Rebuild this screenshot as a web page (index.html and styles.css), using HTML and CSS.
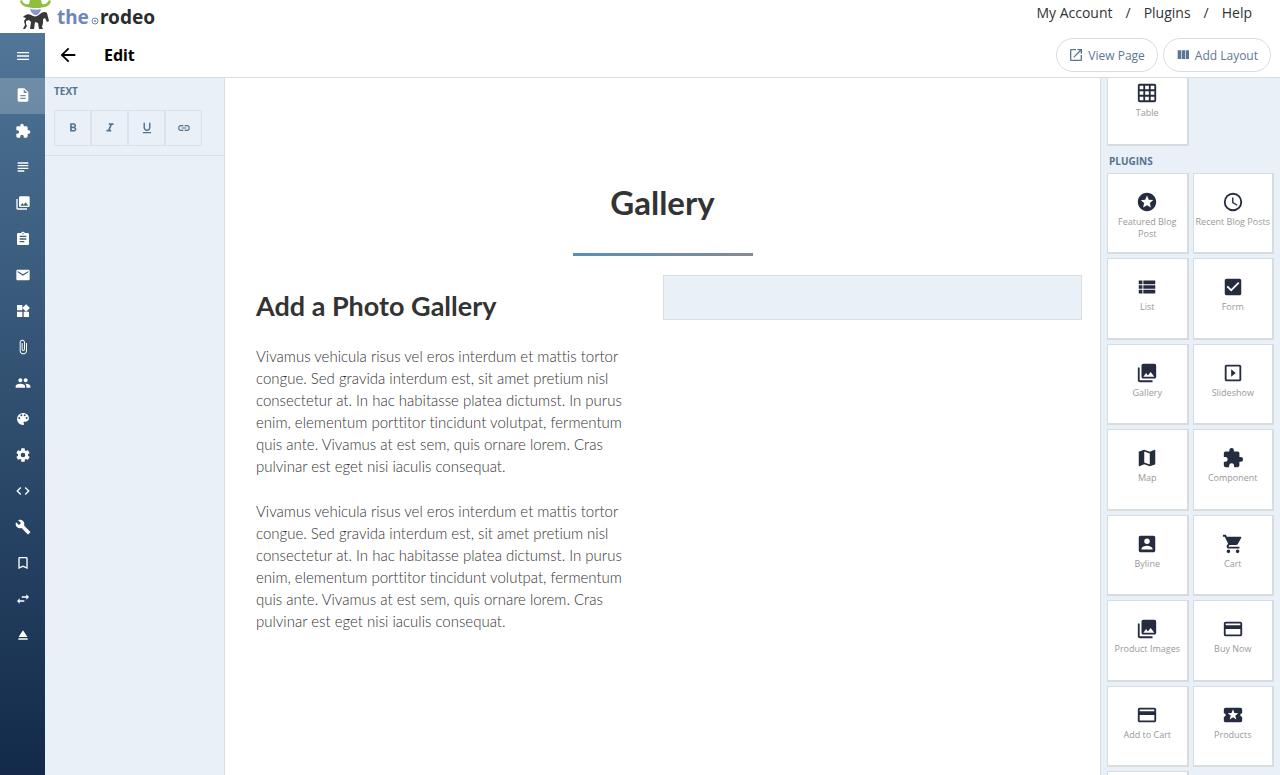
FILE: index.html
```html
<!DOCTYPE html>
<html lang="en">
  <head>
    <meta charset="UTF-8" />
    <meta name="viewport" content="width=device-width, initial-scale=1.0" />
    <title>Edit - Gallery</title>
    <link rel="stylesheet" href="styles.css">
  </head>
  <body>
    <!-- Icon sprite -->
    <svg class="sprite" aria-hidden="true">
      <symbol id="menu" viewBox="0 0 24 24"><path d="M3 18h18v-2H3v2zm0-5h18v-2H3v2zm0-7v2h18V6H3z"/></symbol>
      <symbol id="file" viewBox="0 0 24 24"><path d="M14 2H6c-1.100 0-2 .9-2 2v16c0 1.100.9 2 2 2h12c1.100 0 2-.9 2-2V8l-6-6zm2 16H8v-2h8v2zm0-4H8v-2h8v2zm-3-5V3.500L18.500 9H13z"/></symbol>
      <symbol id="extension" viewBox="0 0 24 24"><path d="M20.500 11H19V7c0-1.100-.9-2-2-2h-4V3.500a2.500 2.500 0 0 0-5 0V5H4c-1.100 0-2 .9-2 2v3.800h1.500a2.700 2.700 0 0 1 0 5.400H2V20c0 1.100.9 2 2 2h3.800v-1.500a2.700 2.700 0 0 1 5.400 0V22H17c1.100 0 2-.9 2-2v-4h1.500a2.500 2.500 0 0 0 0-5z"/></symbol>
      <symbol id="subject" viewBox="0 0 24 24"><path d="M14 17H4v2h10v-2zm6-8H4v2h16V9zM4 15h16v-2H4v2zM4 5v2h16V5H4z"/></symbol>
      <symbol id="images" viewBox="0 0 24 24"><path d="M22 16V4c0-1.100-.9-2-2-2H8c-1.100 0-2 .9-2 2v12c0 1.100.9 2 2 2h12c1.100 0 2-.9 2-2zm-11-4l2.030 2.710L16 11l4 5H8l3-4zM2 6v14c0 1.100.9 2 2 2h14v-2H4V6H2z"/></symbol>
      <symbol id="clipboard" viewBox="0 0 24 24"><path d="M19 3h-4.180C14.400 1.840 13.300 1 12 1s-2.400.84-2.820 2H5c-1.100 0-2 .9-2 2v14c0 1.100.9 2 2 2h14c1.100 0 2-.9 2-2V5c0-1.100-.9-2-2-2zm-7 0a1 1 0 1 1 0 2 1 1 0 0 1 0-2zm2 14H7v-2h7v2zm3-4H7v-2h10v2zm0-4H7V7h10v2z"/></symbol>
      <symbol id="mail" viewBox="0 0 24 24"><path d="M20 4H4c-1.100 0-2 .9-2 2v12c0 1.100.9 2 2 2h16c1.100 0 2-.9 2-2V6c0-1.100-.9-2-2-2zm0 4l-8 5-8-5V6l8 5 8-5v2z"/></symbol>
      <symbol id="widgets" viewBox="0 0 24 24"><path d="M13 13v8h8v-8h-8zM3 21h8v-8H3v8zM3 3v8h8V3H3zm13.660-1.310L11 7.340 16.660 13l5.660-5.660-5.660-5.650z"/></symbol>
      <symbol id="attach" viewBox="0 0 24 24"><path d="M16.500 6v11.500c0 2.210-1.790 4-4 4s-4-1.790-4-4V5a2.500 2.500 0 0 1 5 0v10.500c0 .55-.45 1-1 1s-1-.45-1-1V6H10v9.500a2.500 2.500 0 0 0 5 0V5c0-2.210-1.790-4-4-4S7 2.790 7 5v12.500c0 3.040 2.460 5.500 5.500 5.500s5.500-2.460 5.500-5.500V6h-1.500z"/></symbol>
      <symbol id="people" viewBox="0 0 24 24"><path d="M16 11c1.660 0 2.990-1.340 2.990-3S17.660 5 16 5s-3 1.340-3 3 1.340 3 3 3zm-8 0c1.660 0 2.990-1.340 2.990-3S9.660 5 8 5 5 6.340 5 8s1.340 3 3 3zm0 2c-2.330 0-7 1.170-7 3.500V19h14v-2.500C15 14.170 10.330 13 8 13zm8 0c-.29 0-.62.02-.97.05 1.160.84 1.970 1.970 1.970 3.450V19h6v-2.500c0-2.330-4.670-3.500-7-3.500z"/></symbol>
      <symbol id="palette" viewBox="0 0 24 24"><path d="M12 3a9 9 0 0 0 0 18c.83 0 1.500-.67 1.500-1.500 0-.39-.15-.74-.39-1.010-.23-.26-.38-.61-.38-.99 0-.83.67-1.500 1.500-1.500H16c2.760 0 5-2.240 5-5 0-4.420-4.030-8-9-8zm-5.500 9a1.500 1.500 0 1 1 0-3 1.500 1.500 0 0 1 0 3zm3-4a1.500 1.500 0 1 1 0-3 1.500 1.500 0 0 1 0 3zm5 0a1.500 1.500 0 1 1 0-3 1.500 1.500 0 0 1 0 3zm3 4a1.500 1.500 0 1 1 0-3 1.500 1.500 0 0 1 0 3z"/></symbol>
      <symbol id="settings" viewBox="0 0 24 24"><path d="M19.430 12.980c.04-.32.07-.64.07-.98s-.03-.66-.07-.98l2.110-1.650c.19-.15.24-.42.12-.64l-2-3.460c-.12-.22-.39-.3-.61-.22l-2.490 1c-.52-.4-1.080-.73-1.690-.98l-.38-2.650C14.460 2.180 14.250 2 14 2h-4c-.25 0-.46.18-.49.42l-.38 2.650c-.61.25-1.170.59-1.690.98l-2.490-1c-.23-.09-.49 0-.61.22l-2 3.460c-.13.22-.07.49.12.64l2.110 1.650c-.04.32-.07.65-.07.98s.03.66.07.98l-2.110 1.650c-.19.15-.24.42-.12.64l2 3.460c.12.22.39.3.61.22l2.490-1c.52.4 1.080.73 1.690.98l.38 2.650c.03.24.24.42.49.42h4c.25 0 .46-.18.49-.42l.38-2.650c.61-.25 1.170-.59 1.690-.98l2.490 1c.23.09.49 0 .61-.22l2-3.460c.12-.22.07-.49-.12-.64l-2.110-1.650zM12 15.500a3.500 3.500 0 1 1 0-7 3.500 3.500 0 0 1 0 7z"/></symbol>
      <symbol id="code" viewBox="0 0 24 24"><path d="M9.400 16.600L4.800 12l4.600-4.600L8 6l-6 6 6 6 1.400-1.400zm5.200 0l4.600-4.600-4.600-4.600L16 6l6 6-6 6-1.400-1.400z"/></symbol>
      <symbol id="build" viewBox="0 0 24 24"><path d="M22.700 19l-9.100-9.100c.9-2.300.4-5-1.500-6.900-2-2-5-2.400-7.400-1.300L9 6 6 9 1.600 4.700C.4 7.100.9 10.100 2.900 12.100c1.900 1.900 4.600 2.400 6.900 1.500l9.100 9.100c.4.4 1 .4 1.400 0l2.300-2.300c.5-.4.5-1.100.1-1.400z"/></symbol>
      <symbol id="bookmark" viewBox="0 0 24 24"><path d="M17 3H7c-1.100 0-2 .9-2 2v16l7-3 7 3V5c0-1.100-.9-2-2-2zm0 15l-5-2.180L7 18V5h10v13z"/></symbol>
      <symbol id="swap" viewBox="0 0 24 24"><path d="M6.990 11L3 15l3.990 4v-3H14v-2H6.990v-3zM21 9l-3.990-4v3H10v2h7.010v3L21 9z"/></symbol>
      <symbol id="eject" viewBox="0 0 24 24"><path d="M5 17h14v2H5zm7-12L5.330 15h13.340z"/></symbol>
      <symbol id="back" viewBox="0 0 24 24"><path d="M20 11H7.830l5.590-5.590L12 4l-8 8 8 8 1.410-1.410L7.830 13H20v-2z"/></symbol>
      <symbol id="bold" viewBox="0 0 24 24"><path d="M15.600 10.790c.97-.67 1.650-1.770 1.650-2.790 0-2.260-1.750-4-4-4H7v14h7.040c2.090 0 3.710-1.700 3.710-3.790 0-1.520-.86-2.820-2.150-3.420zM10 6.500h3a1.500 1.500 0 0 1 0 3h-3v-3zm3.500 9H10v-3h3.500a1.500 1.500 0 0 1 0 3z"/></symbol>
      <symbol id="italic" viewBox="0 0 24 24"><path d="M10 4v3h2.210l-3.420 8H6v3h8v-3h-2.210l3.420-8H18V4z"/></symbol>
      <symbol id="underline" viewBox="0 0 24 24"><path d="M12 17c3.310 0 6-2.690 6-6V3h-2.500v8a3.500 3.500 0 0 1-7 0V3H6v8c0 3.310 2.690 6 6 6zm-7 2v2h14v-2H5z"/></symbol>
      <symbol id="link" viewBox="0 0 24 24"><path d="M3.900 12c0-1.710 1.390-3.100 3.100-3.100h4V7H7a5 5 0 0 0 0 10h4v-1.900H7c-1.710 0-3.100-1.390-3.100-3.100zM8 13h8v-2H8v2zm9-6h-4v1.900h4a3.100 3.100 0 0 1 0 6.200h-4V17h4a5 5 0 0 0 0-10z"/></symbol>
      <symbol id="launch" viewBox="0 0 24 24"><path d="M19 19H5V5h7V3H5a2 2 0 0 0-2 2v14a2 2 0 0 0 2 2h14c1.100 0 2-.9 2-2v-7h-2v7zM14 3v2h3.590l-9.830 9.830 1.410 1.410L19 6.410V10h2V3h-7z"/></symbol>
      <symbol id="columns" viewBox="0 0 24 24"><path d="M10 18h5V5h-5v13zm-6 0h5V5H4v13zM16 5v13h5V5h-5z"/></symbol>
      <symbol id="grid" viewBox="0 0 24 24"><path d="M20 2H4c-1.100 0-2 .9-2 2v16c0 1.100.9 2 2 2h16c1.100 0 2-.9 2-2V4c0-1.100-.9-2-2-2zM8 20H4v-4h4v4zm0-6H4v-4h4v4zm0-6H4V4h4v4zm6 12h-4v-4h4v4zm0-6h-4v-4h4v4zm0-6h-4V4h4v4zm6 12h-4v-4h4v4zm0-6h-4v-4h4v4zm0-6h-4V4h4v4z"/></symbol>
      <symbol id="stars" viewBox="0 0 24 24"><path d="M11.990 2C6.470 2 2 6.480 2 12s4.470 10 9.990 10C17.520 22 22 17.520 22 12S17.520 2 11.990 2zm4.240 16L12 15.450 7.770 18l1.120-4.810-3.730-3.230 4.920-.42L12 5l1.920 4.530 4.920.42-3.730 3.230L16.230 18z"/></symbol>
      <symbol id="clock" viewBox="0 0 24 24"><path d="M12 2a10 10 0 1 0 0 20 10 10 0 0 0 0-20zm0 18a8 8 0 1 1 0-16 8 8 0 0 1 0 16zm.5-13H11v6l5.250 3.150.75-1.230-4.500-2.670z"/></symbol>
      <symbol id="list" viewBox="0 0 24 24"><path d="M3 14h4v-4H3v4zm0 5h4v-4H3v4zM3 9h4V5H3v4zm5 5h13v-4H8v4zm0 5h13v-4H8v4zM8 5v4h13V5H8z"/></symbol>
      <symbol id="check" viewBox="0 0 24 24"><path d="M19 3H5c-1.110 0-2 .9-2 2v14c0 1.100.89 2 2 2h14c1.110 0 2-.9 2-2V5c0-1.100-.89-2-2-2zm-9 14l-5-5 1.410-1.410L10 14.170l7.590-7.590L19 8l-9 9z"/></symbol>
      <symbol id="slideshow" viewBox="0 0 24 24"><path d="M10 8v8l5-4-5-4zm9-5H5c-1.100 0-2 .9-2 2v14c0 1.100.9 2 2 2h14c1.100 0 2-.9 2-2V5c0-1.100-.9-2-2-2zm0 16H5V5h14v14z"/></symbol>
      <symbol id="map" viewBox="0 0 24 24"><path d="M20.500 3l-.16.03L15 5.100 9 3 3.360 4.900c-.21.07-.36.25-.36.48V20.500c0 .28.220.5.5.5l.16-.03L9 18.900l6 2.100 5.640-1.900c.21-.07.36-.25.36-.48V3.500c0-.28-.22-.5-.5-.5zM15 19l-6-2.110V5l6 2.110V19z"/></symbol>
      <symbol id="account" viewBox="0 0 24 24"><path d="M3 5v14c0 1.100.89 2 2 2h14c1.100 0 2-.9 2-2V5c0-1.100-.9-2-2-2H5c-1.110 0-2 .9-2 2zm12 4a3 3 0 1 1-6 0 3 3 0 0 1 6 0zm-9 8c0-2 4-3.100 6-3.100s6 1.100 6 3.100v1H6v-1z"/></symbol>
      <symbol id="cart" viewBox="0 0 24 24"><path d="M7 18a2 2 0 1 0 0 4 2 2 0 0 0 0-4zM1 2v2h2l3.600 7.590-1.350 2.450C4.520 15.370 5.480 17 7 17h12v-2H7.420a.25.25 0 0 1-.22-.37l.9-1.630h7.450c.75 0 1.410-.41 1.750-1.030l3.580-6.490A1 1 0 0 0 20 4H5.210l-.94-2H1zm16 16a2 2 0 1 0 0 4 2 2 0 0 0 0-4z"/></symbol>
      <symbol id="card" viewBox="0 0 24 24"><path d="M20 4H4c-1.110 0-1.990.89-1.990 2L2 18c0 1.110.89 2 2 2h16c1.110 0 2-.89 2-2V6c0-1.110-.89-2-2-2zm0 14H4v-6h16v6zm0-10H4V6h16v2z"/></symbol>
      <symbol id="ticket" viewBox="0 0 24 24"><path d="M20 12c0-1.100.9-2 2-2V6c0-1.100-.9-2-2-2H4c-1.100 0-1.990.9-1.990 2v4c1.100 0 1.990.9 1.990 2s-.89 2-2 2v4c0 1.100.9 2 2 2h16c1.100 0 2-.9 2-2v-4c-1.100 0-2-.9-2-2zm-4.420 4.800L12 14.500l-3.580 2.300 1.080-4.120-3.290-2.690 4.240-.25L12 5.800l1.540 3.950 4.240.25-3.290 2.690 1.090 4.110z"/></symbol>
    </svg>

    <header class="top">
      <a class="logo" href="#" aria-label="the rodeo">
        <svg class="logo-figure" viewBox="0 0 32 30">
          <path fill="#8fbf3f" d="M10 0h11l1 4c3 1 5 0 7-4l2 1c-1 5-6 7-15 7S1 6 0 1l2-1c1 4 4 5 7 4z"/>
          <path fill="#8795cb" d="M10 9c4 1 8 1 11 0-1 4-3 6-5 6s-5-2-6-6z"/>
          <path fill="#38383a" d="M4 16c3-2 5-2 7-1 3 2 6 2 9-1 2-2 5-3 7-1l2 8-2 1-2-4-2 1v4l-1 4 1 2h-4l-1-6-3-1-1 7h-4l1-7-2-2-3 1v3l1 2-2 3H3l2-4-1-4 2-3-3-1z"/>
        </svg>
        <span class="logo-the">the</span>
        <svg class="logo-spur" viewBox="0 0 8 8"><circle cx="4" cy="4" r="3" fill="none" stroke="#6f86bd"/><circle cx="4" cy="4" r="1" fill="#6f86bd"/></svg>
        <span class="logo-rodeo">rodeo</span>
      </a>
      <nav class="top-nav">
        <a href="#">My Account</a>
        <span>/</span>
        <a href="#">Plugins</a>
        <span>/</span>
        <a href="#">Help</a>
      </nav>
    </header>

    <div class="app">
      <nav class="sidebar">
        <button class="sidebar-toggle" aria-label="Menu"><svg><use href="#menu"/></svg></button>
        <a class="active" href="#" aria-label="Pages"><svg><use href="#file"/></svg></a>
        <a href="#" aria-label="Plugins"><svg><use href="#extension"/></svg></a>
        <a href="#" aria-label="Menus"><svg><use href="#subject"/></svg></a>
        <a href="#" aria-label="Galleries"><svg><use href="#images"/></svg></a>
        <a href="#" aria-label="Forms"><svg><use href="#clipboard"/></svg></a>
        <a href="#" aria-label="Submissions"><svg><use href="#mail"/></svg></a>
        <a href="#" aria-label="Components"><svg><use href="#widgets"/></svg></a>
        <a href="#" aria-label="Files"><svg><use href="#attach"/></svg></a>
        <a href="#" aria-label="Users"><svg><use href="#people"/></svg></a>
        <a href="#" aria-label="Themes"><svg><use href="#palette"/></svg></a>
        <a href="#" aria-label="Settings"><svg><use href="#settings"/></svg></a>
        <a href="#" aria-label="Code"><svg><use href="#code"/></svg></a>
        <a href="#" aria-label="Tools"><svg><use href="#build"/></svg></a>
        <a href="#" aria-label="Bookmarks"><svg><use href="#bookmark"/></svg></a>
        <a href="#" aria-label="Redirects"><svg><use href="#swap"/></svg></a>
        <a href="#" aria-label="Publish"><svg><use href="#eject"/></svg></a>
      </nav>

      <main class="editor">
        <div class="toolbar">
          <a class="back" href="#" aria-label="Back"><svg><use href="#back"/></svg></a>
          <h1>Edit</h1>
          <div class="actions">
            <button><svg><use href="#launch"/></svg>View Page</button>
            <button><svg><use href="#columns"/></svg>Add Layout</button>
          </div>
        </div>

        <div class="workspace">
          <aside class="format">
            <h2>TEXT</h2>
            <div class="format-buttons">
              <button aria-label="Bold"><svg><use href="#bold"/></svg></button>
              <button aria-label="Italic"><svg><use href="#italic"/></svg></button>
              <button aria-label="Underline"><svg><use href="#underline"/></svg></button>
              <button aria-label="Link"><svg><use href="#link"/></svg></button>
            </div>
          </aside>

          <article class="page">
            <h2 class="page-title">Gallery</h2>
            <div class="row">
              <div class="col">
                <h3>Add a Photo Gallery</h3>
                <p>Vivamus vehicula risus vel eros interdum et mattis tortor congue. Sed gravida interdum est, sit amet pretium nisl consectetur at. In hac habitasse platea dictumst. In purus enim, elementum porttitor tincidunt volutpat, fermentum quis ante. Vivamus at est sem, quis ornare lorem. Cras pulvinar est eget nisi iaculis consequat.</p>
                <p>Vivamus vehicula risus vel eros interdum et mattis tortor congue. Sed gravida interdum est, sit amet pretium nisl consectetur at. In hac habitasse platea dictumst. In purus enim, elementum porttitor tincidunt volutpat, fermentum quis ante. Vivamus at est sem, quis ornare lorem. Cras pulvinar est eget nisi iaculis consequat.</p>
              </div>
              <div class="dropzone"></div>
            </div>
          </article>

          <aside class="blocks">
            <div class="blocks-scroll">
              <div class="tiles">
                <button><svg><use href="#grid"/></svg>Table</button>
              </div>
              <h2>PLUGINS</h2>
              <div class="tiles">
                <button><svg><use href="#stars"/></svg>Featured Blog Post</button>
                <button><svg><use href="#clock"/></svg>Recent Blog Posts</button>
                <button><svg><use href="#list"/></svg>List</button>
                <button><svg><use href="#check"/></svg>Form</button>
                <button><svg><use href="#images"/></svg>Gallery</button>
                <button><svg><use href="#slideshow"/></svg>Slideshow</button>
                <button><svg><use href="#map"/></svg>Map</button>
                <button><svg><use href="#extension"/></svg>Component</button>
                <button><svg><use href="#account"/></svg>Byline</button>
                <button><svg><use href="#cart"/></svg>Cart</button>
                <button><svg><use href="#images"/></svg>Product Images</button>
                <button><svg><use href="#card"/></svg>Buy Now</button>
                <button><svg><use href="#card"/></svg>Add to Cart</button>
                <button><svg><use href="#ticket"/></svg>Products</button>
                <button aria-label="More"></button>
              </div>
            </div>
          </aside>
        </div>
      </main>
    </div>
  </body>
</html>
```
FILE: styles.css
```css
* {
  box-sizing: border-box;
}
body {
  margin: 0;
  height: 100vh;
  display: flex;
  flex-direction: column;
  overflow: hidden;
  font-family: "Open Sans", "Noto Sans", sans-serif;
  font-size: 14px;
  color: #333;
  background: #fff;
}
a {
  color: inherit;
  text-decoration: none;
}
button {
  font: inherit;
  color: inherit;
  margin: 0;
  padding: 0;
  border: none;
  background: none;
  cursor: pointer;
}
h1,
h2,
h3,
p {
  margin: 0;
}
svg {
  display: block;
  fill: currentColor;
}
.sprite {
  display: none;
}

/* Top bar */
.top {
  flex: none;
  height: 33px;
  padding: 0 28px 0 20px;
  display: flex;
  justify-content: space-between;
}
.logo {
  display: flex;
  font-family: "Noto Sans", sans-serif;
  font-size: 19px;
  line-height: 34px;
  font-weight: bold;
}
.logo-figure {
  width: 32px;
  height: 30px;
  margin-right: 5px;
}
.logo-the {
  color: #6f86bd;
}
.logo-spur {
  width: 8px;
  height: 8px;
  margin: 17px 1px 0 2px;
}
.logo-rodeo {
  color: #2c2c2e;
}
.top-nav {
  display: flex;
  gap: 13px;
  line-height: 26px;
}

.app {
  flex: 1;
  min-height: 0;
  display: flex;
}

/* Main menu */
.sidebar {
  flex: none;
  width: 45px;
  display: flex;
  flex-direction: column;
  color: #fff;
  background: linear-gradient(#527697, #45698a 15%, #132a4a);
}
.sidebar a,
.sidebar-toggle {
  height: 36px;
  padding-bottom: 2px;
  display: flex;
  align-items: center;
  justify-content: center;
}
.sidebar .sidebar-toggle {
  height: 45px;
  padding: 0;
}
.sidebar .active {
  background: rgba(255, 255, 255, 0.2);
}
.sidebar svg {
  width: 16px;
  height: 16px;
}

.editor {
  flex: 1;
  min-width: 0;
  display: flex;
  flex-direction: column;
}
.toolbar {
  flex: none;
  height: 45px;
  padding: 0 9px 0 12px;
  display: flex;
  align-items: center;
  border-bottom: 1px solid #d8dde1;
}
.back {
  margin-right: 25px;
  color: #000;
}
.back svg {
  width: 22px;
  height: 22px;
}
.toolbar h1 {
  font-family: "Noto Sans", sans-serif;
  font-size: 16px;
  color: #000;
}
.actions {
  margin-left: auto;
  display: flex;
  gap: 5px;
}
.actions button {
  height: 34px;
  padding: 0 12px 0 11px;
  display: flex;
  align-items: center;
  gap: 4px;
  font-size: 12px;
  color: #5a7896;
  border: 1px solid #d9dce3;
  border-radius: 17px;
}
.actions svg {
  width: 16px;
  height: 16px;
}

.workspace {
  flex: 1;
  min-height: 0;
  display: flex;
}
.format,
.blocks {
  flex: none;
  width: 180px;
  color: #557391;
  background: #e9f0f7;
  overflow: hidden;
}
.format h2,
.blocks h2 {
  font-size: 10px;
  line-height: 14px;
  font-weight: bold;
}

/* Text formatting */
.format {
  border-right: 1px solid #d8dde1;
}
.format h2 {
  padding: 6px 9px 0;
}
.format-buttons {
  display: flex;
  padding: 12px 9px 9px;
  border-bottom: 1px solid #d8dfe6;
}
.format-buttons button {
  width: 37px;
  height: 36px;
  display: flex;
  align-items: center;
  justify-content: center;
  border: 1px solid #dae2ea;
}
.format-buttons svg {
  width: 14px;
  height: 14px;
}

/* Edited page */
.page {
  flex: 1;
  min-width: 0;
  padding: 99px 18px 0;
  font-family: Lato, "Open Sans", sans-serif;
  font-variant-ligatures: none;
  overflow: hidden;
}
.page-title {
  font-size: 33px;
  line-height: 50px;
  text-align: center;
}
.page-title::after {
  content: "";
  display: block;
  width: 180px;
  height: 3px;
  margin: 26px auto 19px;
  background: linear-gradient(to right, #5590bf, #878990);
}
.row {
  display: grid;
  grid-template-columns: 1fr 1fr;
  align-items: start;
}
.col {
  padding: 10px 26px 10px 13px;
}
.col h3 {
  font-size: 27px;
  line-height: 42px;
  margin-bottom: 18px;
}
.col p {
  margin-bottom: 23px;
  font-size: 15px;
  font-weight: 300;
  line-height: 22px;
}
.dropzone {
  height: 45px;
  background: #e9f0f7;
  border: 1px solid #dadfe2;
}

/* Block picker */
.blocks {
  padding: 0 6px;
  border-left: 1px solid #d8dde1;
}
.blocks-scroll {
  margin-top: -14px;
}
.blocks h2 {
  padding: 8px 2px 5px;
}
.tiles {
  display: grid;
  grid-template-columns: 1fr 1fr;
  gap: 4px;
}
.tiles button {
  aspect-ratio: 1;
  padding: 17px 2px 0;
  display: flex;
  flex-direction: column;
  align-items: center;
  font-size: 9px;
  line-height: 12px;
  color: #999;
  background: #fff;
  border: 1px solid #d5dde4;
  border-right: 2px solid #d9dcdf;
  border-bottom: 2px solid #d9dcdf;
}
.tiles svg {
  flex: none;
  width: 22px;
  height: 22px;
  margin-bottom: 3px;
  color: #262c40;
}
```
